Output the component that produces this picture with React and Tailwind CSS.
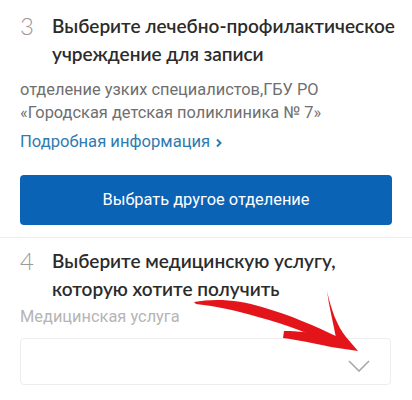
import React from 'react';

const Step = ({ num, lines }) => (
  <div className="flex">
    <span className="w-8 shrink-0 text-[24px] leading-7 font-light text-[#9a9a9a]" style={{ fontFamily: 'Lato, sans-serif' }}>
      {num}
    </span>
    <h2 className="whitespace-nowrap text-[19px] leading-7 font-semibold text-[#2b2b2b]" style={{ fontFamily: 'Lato, sans-serif' }}>
      {lines[0]}
      <br />
      {lines[1]}
    </h2>
  </div>
);

const RedArrow = () => (
  <svg className="absolute left-0 top-0 pointer-events-none" width="412" height="400" viewBox="0 0 412 400">
    <path
      d="M194,302 C215,298 240,300 262,307 C290,315 315,326 338,337 L336,345 C310,334 285,324 258,317 C238,311 216,306 196,304 Z"
      fill="#e3151a"
    />
    <path
      d="M327,291 C331,309 337,326 346,337 L358,351 L331,347 C313,343 298,340 283,338 L284,331 C301,331 319,333 336,338 C333,322 329,306 327,291 Z"
      fill="#e3151a"
    />
  </svg>
);

export default function App() {
  return (
    <div className="relative w-[412px] h-[400px] overflow-hidden bg-white px-5 pt-3" style={{ fontFamily: 'Roboto, sans-serif' }}>
      <Step num="3" lines={['Выберите лечебно-профилактическое', 'учреждение для записи']} />

      <p className="mt-[10px] text-[16.4px] leading-[23px] text-[#6f6f6f]">
        отделение узких специалистов,ГБУ РО
        <br />
        «Городская детская поликлиника № 7»
      </p>

      <a className="mt-2 flex items-center gap-1 text-[16.6px] leading-5 text-[#2f7bb0]">
        Подробная информация
        <svg width="10" height="10" viewBox="0 0 10 10" className="mt-[2px]">
          <path d="M3 1.5 L6.5 5 L3 8.5" fill="none" stroke="#2f7bb0" strokeWidth="2" />
        </svg>
      </a>

      <button className="mt-[23px] flex h-[50px] w-full items-center justify-center rounded bg-[#0b63b6] text-[16.4px] text-white">
        Выбрать другое отделение
      </button>

      <div className="-mx-5 mt-3 border-t border-[#ececec]" />

      <div className="mt-[9px]">
        <Step num="4" lines={['Выберите медицинскую услугу,', 'которую хотите получить']} />
      </div>

      <div className="mt-[3px] text-[16.4px] leading-[22px] text-[#b5b5b5]">Медицинская услуга</div>

      <div className="mt-[10px] flex h-[47px] w-[371px] items-end justify-end rounded-sm border border-[#ededed] pb-[12px] pr-[20px]">
        <svg width="22" height="12" viewBox="0 0 22 12">
          <path d="M1 1 L11 11 L21 1" fill="none" stroke="#a8a8a8" strokeWidth="1.6" />
        </svg>
      </div>

      <RedArrow />
    </div>
  );
}
